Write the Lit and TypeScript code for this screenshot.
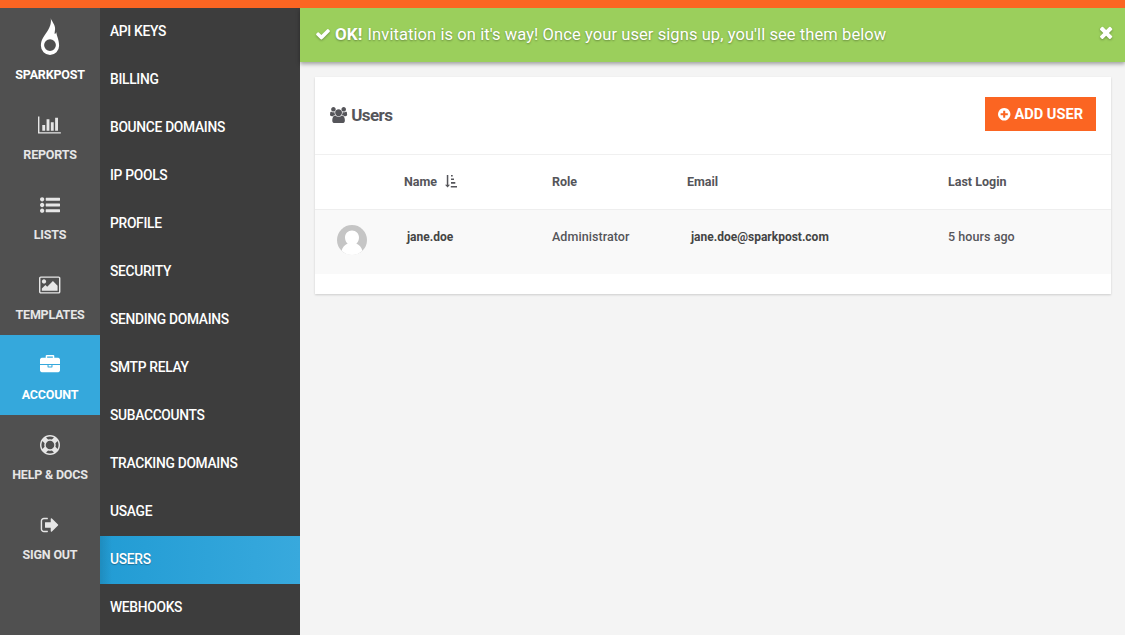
import { LitElement, html, css, svg } from "lit";
import { customElement, property } from "lit/decorators.js";
import { classMap } from "lit/directives/class-map.js";

const RING = "M896 0q182 0 348 71t286 191 191 286 71 348-71 348-191 286-286 191-348 71-348-71-286-191-191-286-71-348 71-348 191-286 286-191 348-71zm0 128q-190 0-361 90l194 194q82-28 167-28t167 28l194-194q-171-90-361-90zm-678 1129l194-194q-28-82-28-167t28-167l-194-194q-90 171-90 361t90 361zm678 407q190 0 361-90l-194-194q-82 28-167 28t-167-28l-194 194q171 90 361 90zm0-384q159 0 271.5-112.5t112.5-271.5-112.5-271.5-271.5-112.5-271.5 112.5-112.5 271.5 112.5 271.5 271.5 112.5zm484-217l194 194q90-171 90-361t-90-361l-194 194q28 82 28 167t-28 167z";

const ICONS: Record<string, { box: string; d: string }> = {
  chart: { box: "0 0 2112 1792", d: "M640 896v512h-256v-512h256zm384-512v1024h-256v-1024h256zm1024 1152v128h-2048v-1536h128v1408h1920zm-640-896v768h-256v-768h256zm384-384v1152h-256v-1152h256z" },
  list: { box: "0 0 1792 1792", d: "M384 1408q0 80-56 136t-136 56-136-56-56-136 56-136 136-56 136 56 56 136zm0-512q0 80-56 136t-136 56-136-56-56-136 56-136 136-56 136 56 56 136zm1408 416v192q0 13-9.5 22.5t-22.5 9.5h-1216q-13 0-22.5-9.5t-9.5-22.5v-192q0-13 9.5-22.5t22.5-9.5h1216q13 0 22.5 9.5t9.5 22.5zm-1408-928q0 80-56 136t-136 56-136-56-56-136 56-136 136-56 136 56 56 136zm1408 416v192q0 13-9.5 22.5t-22.5 9.5h-1216q-13 0-22.5-9.5t-9.5-22.5v-192q0-13 9.5-22.5t22.5-9.5h1216q13 0 22.5 9.5t9.5 22.5zm0-512v192q0 13-9.5 22.5t-22.5 9.5h-1216q-13 0-22.5-9.5t-9.5-22.5v-192q0-13 9.5-22.5t22.5-9.5h1216q13 0 22.5 9.5t9.5 22.5z" },
  image: { box: "0 0 1920 1792", d: "M640 576q0 80-56 136t-136 56-136-56-56-136 56-136 136-56 136 56 56 136zm1024 384v448h-1408v-192l320-320 160 160 512-512zm96-704h-1600q-13 0-22.5 9.5t-9.5 22.5v1216q0 13 9.5 22.5t22.5 9.5h1600q13 0 22.5-9.5t9.5-22.5v-1216q0-13-9.5-22.5t-22.5-9.5zm160 32v1216q0 66-47 113t-113 47h-1600q-66 0-113-47t-47-113v-1216q0-66 47-113t113-47h1600q66 0 113 47t47 113z" },
  briefcase: { box: "0 0 1792 1792", d: "M640 256h512v-128h-512v128zm1152 640v480q0 66-47 113t-113 47h-1472q-66 0-113-47t-47-113v-480h672v160q0 26 19 45t45 19h320q26 0 45-19t19-45v-160h672zm-768 0v128h-256v-128h256zm768-480v384h-1792v-384q0-66 47-113t113-47h352v-160q0-40 28-68t68-28h576q40 0 68 28t28 68v160h352q66 0 113 47t47 113z" },
  ring: { box: "0 0 1792 1792", d: RING },
  signout: { box: "0 0 1792 1792", d: "M704 1440q0 4 1 20t.5 26.5-3 23.5-10 19.5-20.5 6.5h-320q-119 0-203.5-84.5t-84.5-203.5v-704q0-119 84.5-203.5t203.5-84.5h320q13 0 22.5 9.5t9.5 22.5q0 4 1 20t.5 26.5-3 23.5-10 19.5-20.5 6.5h-320q-66 0-113 47t-47 113v704q0 66 47 113t113 47h312l11.5 1 11.5 3 8 5.5 7 9 2 13.5zm928-544q0 26-19 45l-544 544q-19 19-45 19t-45-19-19-45v-288h-448q-26 0-45-19t-19-45v-384q0-26 19-45t45-19h448v-288q0-26 19-45t45-19 45 19l544 544q19 19 19 45z" },
  check: { box: "0 0 1792 1792", d: "M1671 566q0 40-28 68l-724 724-136 136q-28 28-68 28t-68-28l-136-136-362-362q-28-28-28-68t28-68l136-136q28-28 68-28t68 28l294 295 656-657q28-28 68-28t68 28l136 136q28 28 28 68z" },
  times: { box: "302 0 1188 1792", d: "M1490 1322q0 40-28 68l-136 136q-28 28-68 28t-68-28l-294-294-294 294q-28 28-68 28t-68-28l-136-136q-28-28-28-68t28-68l294-294-294-294q-28-28-28-68t28-68l136-136q28-28 68-28t68 28l294 294 294-294q28-28 68-28t68 28l136 136q28 28 28 68t-28 68l-294 294 294 294q28 28 28 68z" },
  plus: { box: "128 0 1536 1792", d: "M1344 960v-128q0-26-19-45t-45-19h-256v-256q0-26-19-45t-45-19h-128q-26 0-45 19t-19 45v256h-256q-26 0-45 19t-19 45v128q0 26 19 45t45 19h256v256q0 26 19 45t45 19h128q26 0 45-19t19-45v-256h256q26 0 45-19t19-45zm320-64q0 209-103 385.5t-279.5 279.5-385.5 103-385.5-103-279.5-279.5-103-385.5 103-385.5 279.5-279.5 385.5-103 385.5 103 279.5 279.5 103 385.5z" },
  users: { box: "0 0 1920 1792", d: "M593 896q-162 5-265 128h-134q-82 0-138-40.5t-56-118.5q0-353 124-353 6 0 43.5 21t97.5 42.5 119 21.5q67 0 133-23-5 37-5 66 0 139 81 256zm1071 637q0 120-73 189.5t-194 69.5h-874q-121 0-194-69.5t-73-189.5q0-53 3.5-103.5t14-109 26.5-108.5 43-97.5 62-81 85.5-53.5 111.5-20q10 0 43 21.5t73 48 107 48 135 21.5 135-21.5 107-48 73-48 43-21.5q61 0 111.5 20t85.5 53.5 62 81 43 97.5 26.5 108.5 14 109 3.5 103.5zm-1024-1277q0 106-75 181t-181 75-181-75-75-181 75-181 181-75 181 75 75 181zm704 384q0 159-112.5 271.5t-271.5 112.5-271.5-112.5-112.5-271.5 112.5-271.5 271.5-112.5 271.5 112.5 112.5 271.5zm576 225q0 78-56 118.5t-138 40.5h-134q-103-123-265-128 81-117 81-256 0-29-5-66 66 23 133 23 59 0 119-21.5t97.5-42.5 43.5-21q124 0 124 353zm-128-609q0 106-75 181t-181 75-181-75-75-181 75-181 181-75 181 75 75 181z" },
};

@customElement("sp-icon")
class SpIcon extends LitElement {
  @property() name = "";
  static styles = css`
    :host { display: inline-flex; height: 20px; }
    svg { display: block; height: 100%; width: auto; fill: currentColor; overflow: visible; }
  `;
  render() {
    const icon = ICONS[this.name];
    return html`<svg viewBox=${icon.box}>${svg`<path d=${icon.d}></path>`}</svg>`;
  }
}

const NAV = [
  { icon: "chart", label: "REPORTS" },
  { icon: "list", label: "LISTS" },
  { icon: "image", label: "TEMPLATES" },
  { icon: "briefcase", label: "ACCOUNT", active: true },
  { icon: "ring", label: "HELP & DOCS" },
  { icon: "signout", label: "SIGN OUT" },
];

const SUBNAV = ["API KEYS", "BILLING", "BOUNCE DOMAINS", "IP POOLS", "PROFILE", "SECURITY", "SENDING DOMAINS",
  "SMTP RELAY", "SUBACCOUNTS", "TRACKING DOMAINS", "USAGE", "USERS", "WEBHOOKS"];

@customElement("app-root")
class AppRoot extends LitElement {
  static styles = css`
    :host {
      display: flex; flex-direction: column; box-sizing: border-box; height: 635px; overflow: hidden;
      border-top: 8px solid #fb6522; background: #f4f4f4; color: #55555a;
      font-family: "Roboto", sans-serif; font-size: 12px;
    }
    * { box-sizing: border-box; }
    .body { flex: 1; min-height: 0; display: grid; grid-template-columns: 100px 200px 1fr; }
    .nav { background: #505050; padding-top: 7px; color: #e6e6e6; }
    .item { height: 80px; display: flex; flex-direction: column; align-items: center; padding-top: 20px; font-weight: 700; font-size: 12.5px; letter-spacing: -0.2px; }
    .item .label { margin-top: 12px; line-height: 16px; white-space: nowrap; }
    .item.brand { padding-top: 3px; color: #fff; }
    .item.brand .label { margin-top: 11px; }
    .item.active { background: #35a8dc; color: #fff; }
    .subnav { background: #3d3d3d; color: #fff; overflow: hidden; font-size: 13.8px; font-weight: 500; letter-spacing: -0.3px; }
    .sub { height: 48px; line-height: 46px; padding-left: 10px; }
    .sub.active { background: linear-gradient(90deg, rgba(0,0,0,.1), transparent 12px), linear-gradient(90deg, #229cd4, #38a9dd); text-shadow: 0 1px 1px rgba(0,0,0,.3); }
    .main { min-width: 0; }
    .alert { height: 54px; padding: 0 13px 2px 15px; display: flex; align-items: center; background: #9bcf5c; color: #fff;
      font-size: 16.5px; letter-spacing: 0.08px; box-shadow: 0 2px 4px rgba(0,0,0,.35); }
    .alert sp-icon { height: 16px; filter: drop-shadow(0 1px 1px rgba(0,0,0,.3)); }
    .alert .close { height: 18.500px; margin-bottom: 3px; }
    .message { flex: 1; margin-left: 4px; text-shadow: 0 1px 2px rgba(0,0,0,.35); white-space: nowrap; }
    .message b { margin-right: 1px; font-size: 17px; }
    .card { margin: 15px 14px 0 15px; height: 217px; background: #fff; box-shadow: 0 1px 2px rgba(0,0,0,.16); }
    .head { height: 78px; border-bottom: 1px solid #f0f0f0; padding: 0 15px 1px; display: flex; align-items: center; justify-content: space-between; }
    .title { display: flex; align-items: center; gap: 4px; margin: 0; font-size: 17px; font-weight: 700; letter-spacing: -0.55px; }
    .title sp-icon { height: 16px; }
    .button { width: 111px; height: 34px; margin-top: -2px; background: #fb6522; color: #fff; display: flex; align-items: center; justify-content: center; gap: 4px; font-size: 14.600px; font-weight: 700; }
    .button sp-icon { height: 14.500px; }
    .row { display: grid; grid-template-columns: 89px 148px 135px 261px 1fr; }
    .row.th { height: 55px; line-height: 53px; border-bottom: 1px solid #eeeeee; font-weight: 700; font-size: 12.5px; }
    .row.td { height: 64px; line-height: 53px; background: #f9f9f9; font-size: 12.5px; font-weight: 500; letter-spacing: 0.06px; }
    .row.td b { color: #444; margin-left: 3px; font-size: 12px; line-height: 55px; letter-spacing: 0; }
    .row.td .email { margin-left: 4px; }
    .name { display: flex; align-items: flex-start; gap: 8px; }
    .sort { width: 12px; height: 13px; margin-top: 20px; fill: currentColor; }
    .avatar { width: 30px; height: 30px; margin: 15px 0 0 22px; display: block; }
  `;
  render() {
    return html`
      <div class="body">
        <nav class="nav">
          <div class="item brand">
            <svg width="20" height="38" viewBox="0 0 20 38">
              <path fill="#fff" fill-rule="evenodd" d="M10.700 0C11.300 3 15.300 6.500 15.100 11C15 12.800 14.500 14 14.700 16C15.600 15.700 16.100 15 16.300 14C16.600 18 19.100 21.500 19.100 27.700A9.100 9.300 0 0 1 .9 27.700C.9 22 3.800 18.500 6.500 14.500C9.500 10.300 11.700 5.500 10.700 0ZM10 21.200A5.900 5.900 0 1 0 10 33A5.900 5.900 0 1 0 10 21.200Z"></path>
            </svg>
            <span class="label">SPARKPOST</span>
          </div>
          ${NAV.map((n) => html`<div class=${classMap({ item: true, active: !!n.active })}>
            <sp-icon name=${n.icon}></sp-icon><span class="label">${n.label}</span></div>`)}
        </nav>
        <nav class="subnav">
          ${SUBNAV.map((s) => html`<div class=${classMap({ sub: true, active: s === "USERS" })}>${s}</div>`)}
        </nav>
        <main class="main">
          <div class="alert">
            <sp-icon name="check"></sp-icon>
            <span class="message"><b>OK!</b> Invitation is on it's way! Once your user signs up, you'll see them below</span>
            <sp-icon class="close" name="times"></sp-icon>
          </div>
          <section class="card">
            <div class="head">
              <h2 class="title"><sp-icon name="users"></sp-icon>Users</h2>
              <div class="button"><sp-icon name="plus"></sp-icon>ADD USER</div>
            </div>
            <div class="row th">
              <span></span>
              <span class="name">Name
                <svg class="sort" viewBox="0 0 12 13"><path d="M1.800 0h1.500v9.800h1.700L2.600 12.600 0 9.800h1.800zM6 0h1.700v1.600h-1.700zM6 3.500h3v1.600h-3zM6 7.100h4.300v1.600h-4.300zM5.800 10.900h6.200v1.700h-6.200z"></path></svg>
              </span>
              <span>Role</span><span>Email</span><span>Last Login</span>
            </div>
            <div class="row td">
              <svg class="avatar" viewBox="0 0 30 30">
                <circle cx="15" cy="15" r="15" fill="#c5c5c5"></circle>
                <path fill="#fff" d="M15 5.500c4 0 7 3 7 7 0 2.500-1 4.800-2.700 6 3 1.200 5.200 3.800 6.100 7.300A15 15 0 0 1 4.600 25.800c.9-3.500 3.100-6.100 6.100-7.300C9 17.300 8 15 8 12.500c0-4 3-7 7-7z"></path>
              </svg>
              <b>jane.doe</b><span>Administrator</span><b class="email">jane.doe@sparkpost.com</b><span>5 hours ago</span>
            </div>
          </section>
        </main>
      </div>`;
  }
}
